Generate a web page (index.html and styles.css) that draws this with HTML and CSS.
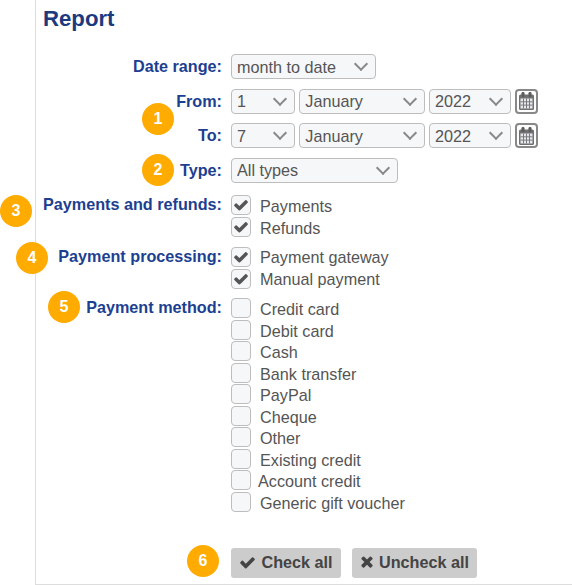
FILE: index.html
```html
<!DOCTYPE html>
<html lang="en">
<head>
  <meta charset="UTF-8">
  <title>Report</title>
  <link rel="stylesheet" href="styles.css">
</head>
<body>
  <div class="page">
    <h1>Report</h1>
    <form class="report">
      <div class="row">
        <div class="name">Date range:</div>
        <div class="fields">
          <span class="pick w-range"><select><option>month to date</option></select></span>
        </div>
      </div>
      <div class="row">
        <div class="name">From:</div>
        <div class="fields">
          <span class="pick w-day"><select><option>1</option></select></span>
          <span class="pick w-month"><select><option>January</option></select></span>
          <span class="pick w-year"><select><option>2022</option></select></span>
          <button type="button" class="cal">
            <svg width="15" height="18" viewBox="0 0 15 18"><rect x="0" y="2.5" width="15" height="15.5" rx="1.5" fill="#707070"/><rect x="2.5" y="0" width="3" height="5" rx="1.2" fill="#5c5c5c"/><rect x="9.5" y="0" width="3" height="5" rx="1.2" fill="#5c5c5c"/><path d="M1.5 6.5h12v10h-12z" fill="#e6e8ee"/><path d="M4.5 6.5v10M7.5 6.5v10M10.5 6.5v10M1.5 9.8h12M1.5 13.1h12" stroke="#7a7a7a" stroke-width="1" fill="none"/></svg>
          </button>
        </div>
      </div>
      <div class="row">
        <div class="name">To:</div>
        <div class="fields">
          <span class="pick w-day"><select><option>7</option></select></span>
          <span class="pick w-month"><select><option>January</option></select></span>
          <span class="pick w-year"><select><option>2022</option></select></span>
          <button type="button" class="cal">
            <svg width="15" height="18" viewBox="0 0 15 18"><rect x="0" y="2.5" width="15" height="15.5" rx="1.5" fill="#707070"/><rect x="2.5" y="0" width="3" height="5" rx="1.2" fill="#5c5c5c"/><rect x="9.5" y="0" width="3" height="5" rx="1.2" fill="#5c5c5c"/><path d="M1.5 6.5h12v10h-12z" fill="#e6e8ee"/><path d="M4.5 6.5v10M7.5 6.5v10M10.5 6.5v10M1.5 9.8h12M1.5 13.1h12" stroke="#7a7a7a" stroke-width="1" fill="none"/></svg>
          </button>
        </div>
      </div>
      <div class="row">
        <div class="name">Type:</div>
        <div class="fields">
          <span class="pick w-type"><select><option>All types</option></select></span>
        </div>
      </div>

      <div class="row first-checks">
        <div class="name">Payments and refunds:</div>
        <div class="checks">
          <label class="check"><span class="box"><svg viewBox="0 0 1792 1792"><path d="M1671 566q0 40-28 68l-724 724-136 136q-28 28-68 28t-68-28l-136-136-362-362q-28-28-28-68t28-68l136-136q28-28 68-28t68 28l294 295 656-657q28-28 68-28t68 28l136 136q28 28 28 68z"/></svg></span>Payments</label>
          <label class="check"><span class="box"><svg viewBox="0 0 1792 1792"><path d="M1671 566q0 40-28 68l-724 724-136 136q-28 28-68 28t-68-28l-136-136-362-362q-28-28-28-68t28-68l136-136q28-28 68-28t68 28l294 295 656-657q28-28 68-28t68 28l136 136q28 28 28 68z"/></svg></span>Refunds</label>
        </div>
      </div>
      <div class="row second-checks">
        <div class="name">Payment processing:</div>
        <div class="checks">
          <label class="check"><span class="box"><svg viewBox="0 0 1792 1792"><path d="M1671 566q0 40-28 68l-724 724-136 136q-28 28-68 28t-68-28l-136-136-362-362q-28-28-28-68t28-68l136-136q28-28 68-28t68 28l294 295 656-657q28-28 68-28t68 28l136 136q28 28 28 68z"/></svg></span>Payment gateway</label>
          <label class="check"><span class="box"><svg viewBox="0 0 1792 1792"><path d="M1671 566q0 40-28 68l-724 724-136 136q-28 28-68 28t-68-28l-136-136-362-362q-28-28-28-68t28-68l136-136q28-28 68-28t68 28l294 295 656-657q28-28 68-28t68 28l136 136q28 28 28 68z"/></svg></span>Manual payment</label>
        </div>
      </div>
      <div class="row third-checks">
        <div class="name">Payment method:</div>
        <div class="checks">
          <label class="check"><span class="box"></span>Credit card</label>
          <label class="check"><span class="box"></span>Debit card</label>
          <label class="check"><span class="box"></span>Cash</label>
          <label class="check"><span class="box"></span>Bank transfer</label>
          <label class="check"><span class="box"></span>PayPal</label>
          <label class="check"><span class="box"></span>Cheque</label>
          <label class="check"><span class="box"></span>Other</label>
          <label class="check"><span class="box"></span>Existing credit</label>
          <label class="check tight"><span class="box"></span>Account credit</label>
          <label class="check"><span class="box"></span>Generic gift voucher</label>
        </div>
      </div>

      <div class="row actions">
        <div class="name"></div>
        <div class="fields wide">
          <button type="button" class="btn w-check">
            <svg width="17" height="17" viewBox="0 0 1792 1792"><path d="M1671 566q0 40-28 68l-724 724-136 136q-28 28-68 28t-68-28l-136-136-362-362q-28-28-28-68t28-68l136-136q28-28 68-28t68 28l294 295 656-657q28-28 68-28t68 28l136 136q28 28 28 68z"/></svg>
            Check all
          </button>
          <button type="button" class="btn w-uncheck">
            <svg width="14" height="17" viewBox="0 0 1408 1792"><path d="M1298 1214q0 40-28 68l-136 136q-28 28-68 28t-68-28l-294-294-294 294q-28 28-68 28t-68-28l-136-136q-28-28-28-68t28-68l294-294-294-294q-28-28-28-68t28-68l136-136q28-28 68-28t68 28l294 294 294-294q28-28 68-28t68 28l136 136q28 28 28 68t-28 68l-294 294 294 294q28 28 28 68z"/></svg>
            Uncheck all
          </button>
        </div>
      </div>
    </form>

    <!-- numbered callouts on top of the form -->
    <span class="badge b1">1</span>
    <span class="badge b2">2</span>
    <span class="badge b3">3</span>
    <span class="badge b4">4</span>
    <span class="badge b5">5</span>
    <span class="badge b6">6</span>
  </div>
</body>
</html>
```

FILE: styles.css
```css
body {
  margin: 0;
  background: #ffffff;
  font-family: "Liberation Sans", Arial, sans-serif;
  color: #555555;
}

.page {
  position: relative;
  height: 584px;
  margin-left: 35px;
  padding-left: 7px;
  border-left: 1px solid #dddddd;
  border-bottom: 1px solid #dddddd;
}

h1 {
  margin: 0;
  padding-top: 6px;
  height: 54px;
  box-sizing: border-box;
  font-size: 22.2px;
  line-height: 26px;
  font-weight: bold;
  color: #1c3a7e;
}

.report {
  display: flex;
  flex-direction: column;
  gap: 9.5px;
}

.row {
  display: flex;
  gap: 9px;
}

.name {
  width: 179px;
  flex: none;
  text-align: right;
  font-size: 16.2px;
  font-weight: bold;
  line-height: 25px;
  color: #1d3f91;
  white-space: nowrap;
}

.first-checks .name,
.second-checks .name,
.third-checks .name {
  line-height: 19px;
}

.fields {
  display: flex;
  gap: 4.3px;
}

.fields.wide {
  gap: 11px;
}

.pick {
  position: relative;
  display: block;
  height: 25px;
}

.pick::after {
  content: "";
  position: absolute;
  right: 10px;
  top: 5px;
  width: 8px;
  height: 8px;
  border-right: 2px solid #888888;
  border-bottom: 2px solid #888888;
  transform: rotate(45deg);
  pointer-events: none;
}

select {
  appearance: none;
  display: block;
  width: 100%;
  height: 25px;
  padding: 0 5px;
  border: 1px solid #bdbdbd;
  border-radius: 4px;
  background: #f6f7f9;
  font-family: inherit;
  font-size: 16.2px;
  color: #555555;
}

.w-range { width: 145px; }
.w-day { width: 64px; }
.w-month { width: 125.5px; }
.w-year { width: 82px; }
.w-type { width: 167px; }

.cal {
  width: 23px;
  height: 25px;
  padding: 0;
  display: flex;
  align-items: center;
  justify-content: center;
  border: 2px solid #888888;
  border-radius: 4px;
  background: #ffffff;
}

.first-checks {
  margin-top: 3px;
}

.second-checks {
  margin-top: 1px;
}

.checks {
  display: flex;
  flex-direction: column;
  gap: 1.5px;
}

.check {
  display: flex;
  align-items: flex-start;
  gap: 9px;
  height: 20px;
  font-size: 16.2px;
  line-height: 23px;
}

.second-checks .check {
  line-height: 21px;
}

.check.tight {
  gap: 7px;
}

.box {
  width: 20px;
  height: 20px;
  box-sizing: border-box;
  display: flex;
  align-items: center;
  justify-content: center;
  border: 1px solid #bdbdbd;
  border-radius: 4px;
  background: #f6f7f9;
}

.box svg {
  width: 16px;
  height: 16px;
  fill: #555555;
}

.actions {
  margin-top: 27px;
}

.btn {
  height: 30px;
  padding: 0 0 2px;
  display: flex;
  align-items: center;
  justify-content: center;
  gap: 5px;
  border: none;
  border-radius: 3px;
  background: #cccccc;
  font-family: inherit;
  font-size: 16.2px;
  font-weight: bold;
  color: #444444;
}

.btn svg {
  fill: #444444;
}

.w-check { width: 110px; }
.w-uncheck { width: 125px; }

.badge {
  position: absolute;
  width: 32px;
  height: 32px;
  border-radius: 50%;
  background: #ffab00;
  color: #ffffff;
  font-size: 16px;
  font-weight: bold;
  line-height: 32px;
  text-align: center;
}

.b1 { left: 106px; top: 103px; }
.b2 { left: 106px; top: 154px; }
.b3 { left: -36px; top: 195px; }
.b4 { left: -20px; top: 242px; }
.b5 { left: 12px; top: 291px; }
.b6 { left: 151px; top: 545px; }
```
